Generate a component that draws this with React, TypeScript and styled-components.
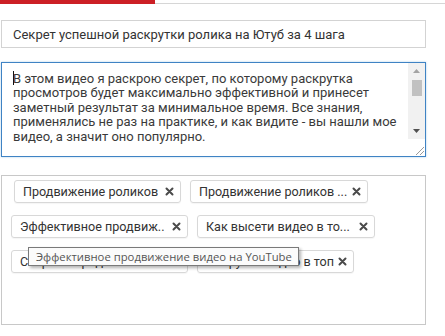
import styled, { createGlobalStyle } from "styled-components";

const GlobalStyle = createGlobalStyle`
  html, body {
    margin: 0;
    padding: 0;
    background: #ffffff;
  }
  body {
    font-family: Roboto, "Liberation Sans", Arial, sans-serif;
    color: #333333;
  }
`;

const Page = styled.div`
  width: 445px;
  height: 336px;
  overflow: hidden;
  display: flex;
  flex-direction: column;
`;

const TopBar = styled.div`
  display: flex;
  align-items: flex-end;
  height: 4px;
`;

const ActiveTab = styled.div`
  width: 155px;
  height: 4px;
  background: #cc1f25;
`;

const TabRule = styled.div`
  flex: 1;
  height: 1px;
  background: #d6d6d6;
`;

const Form = styled.div`
  display: flex;
  flex-direction: column;
  width: 425px;
  margin: 16px 0 0 1px;
`;

const TitleInput = styled.div`
  box-sizing: border-box;
  height: 28px;
  border: 1px solid #d3d3d3;
  padding: 0 11px;
  display: flex;
  align-items: center;
  font-size: 13px;
  color: #333333;
  white-space: nowrap;
`;

const TextArea = styled.div`
  box-sizing: border-box;
  margin-top: 14px;
  height: 95px;
  border: 1px solid #3f83c4;
  box-shadow: 0 0 2px rgba(80, 150, 210, 0.45);
  display: flex;
`;

const TextBody = styled.div`
  flex: 1;
  padding: 8px 10px 0 11px;
  font-size: 13px;
  line-height: 14.4px;
  color: #3a3a3a;
`;

const Caret = styled.span`
  display: inline-block;
  width: 1px;
  height: 14px;
  margin-right: -1px;
  vertical-align: -2px;
  background: #111111;
`;

const ScrollColumn = styled.div`
  width: 17px;
  display: flex;
  flex-direction: column;
  background: #f1f1f1;
`;

const ScrollButton = styled.div`
  height: 16px;
  display: flex;
  align-items: center;
  justify-content: center;
`;

const Track = styled.div`
  flex: 1;
  display: flex;
  flex-direction: column;
  align-items: center;
`;

const Thumb = styled.div`
  width: 10px;
  height: 16px;
  margin-top: 1px;
  background: #c1c1c1;
`;

const Grip = styled.div`
  height: 17px;
  background: #ffffff;
  display: flex;
  align-items: flex-end;
  justify-content: flex-end;
`;

const TagBox = styled.div`
  position: relative;
  box-sizing: border-box;
  margin-top: 18px;
  height: 150px;
  border: 1px solid #c8c8c8;
  padding: 4px 9px 0 9px;
  display: flex;
  flex-wrap: wrap;
  align-content: flex-start;
  column-gap: 9px;
  row-gap: 12px;
`;

const Tag = styled.div<{ $w: number; $shift?: number }>`
  box-sizing: border-box;
  width: ${(p) => p.$w}px;
  height: 23px;
  margin-left: ${(p) => p.$shift ?? 0}px;
  border: 1px solid #d8d8d8;
  border-radius: 3px;
  box-shadow: 0 1px 1px rgba(0, 0, 0, 0.04);
  padding: 0 6px 0 8px;
  display: flex;
  align-items: center;
  justify-content: space-between;
  gap: 4px;
  font-size: 12.6px;
  color: #333333;
  white-space: nowrap;
`;

const TagLabel = styled.span`
  min-width: 0;
  overflow: hidden;
`;

const CrossIcon = styled.svg`
  flex: none;
`;

const Tooltip = styled.div`
  position: absolute;
  left: 26px;
  top: 71px;
  box-sizing: border-box;
  height: 19px;
  padding: 0 6px 0 7px;
  background: #fbfbfb;
  border: 1px solid #7a7a7a;
  box-shadow: 2px 2px 3px rgba(0, 0, 0, 0.3);
  display: flex;
  align-items: center;
  font-family: "Open Sans", "Noto Sans", sans-serif;
  font-size: 11.3px;
  color: #555555;
  white-space: nowrap;
`;

const Cross = () => (
  <CrossIcon width="9" height="9" viewBox="0 0 9 9">
    <path d="M1.5 1.5 L7.5 7.5 M7.5 1.5 L1.5 7.5" stroke="#4a4a4a" strokeWidth="2" strokeLinecap="round" />
  </CrossIcon>
);

const tags = [
  { label: "Продвижение роликов", w: 167, shift: 3 },
  { label: "Продвижение роликов ...", w: 178 },
  { label: "Эффективное продвиж..", w: 177 },
  { label: "Как высети видео в то...", w: 178 },
  { label: "Секреты продвижения", w: 177 },
  { label: "Накрутка видео в топ", w: 157 },
];

export default function App() {
  return (
    <Page>
      <GlobalStyle />
      <TopBar>
        <ActiveTab />
        <TabRule />
      </TopBar>
      <Form>
        <TitleInput>Секрет успешной раскрутки ролика на Ютуб за 4 шага</TitleInput>
        <TextArea>
          <TextBody>
            <Caret />В этом видео я раскрою секрет, по которому раскрутка просмотров будет
            максимально эффективной и принесет заметный результат за минимальное время. Все
            знания, применялись не раз на практике, и как видите - вы нашли мое видео, а значит
            оно популярно.
          </TextBody>
          <ScrollColumn>
            <ScrollButton>
              <svg width="7" height="4" viewBox="0 0 7 4">
                <path d="M0 4 L3.5 0 L7 4 Z" fill="#a3a3a3" />
              </svg>
            </ScrollButton>
            <Track>
              <Thumb />
            </Track>
            <ScrollButton>
              <svg width="7" height="4" viewBox="0 0 7 4">
                <path d="M0 0 L3.5 4 L7 0 Z" fill="#505050" />
              </svg>
            </ScrollButton>
            <Grip>
              <svg width="12" height="12" viewBox="0 0 12 12">
                <path d="M3 11 L11 3 M7 11 L11 7" stroke="#9a9a9a" strokeWidth="1" />
              </svg>
            </Grip>
          </ScrollColumn>
        </TextArea>
        <TagBox>
          {tags.map((t) => (
            <Tag key={t.label} $w={t.w} $shift={t.shift}>
              <TagLabel>{t.label}</TagLabel>
              <Cross />
            </Tag>
          ))}
          <Tooltip>Эффективное продвижение видео на YouTube</Tooltip>
        </TagBox>
      </Form>
    </Page>
  );
}
